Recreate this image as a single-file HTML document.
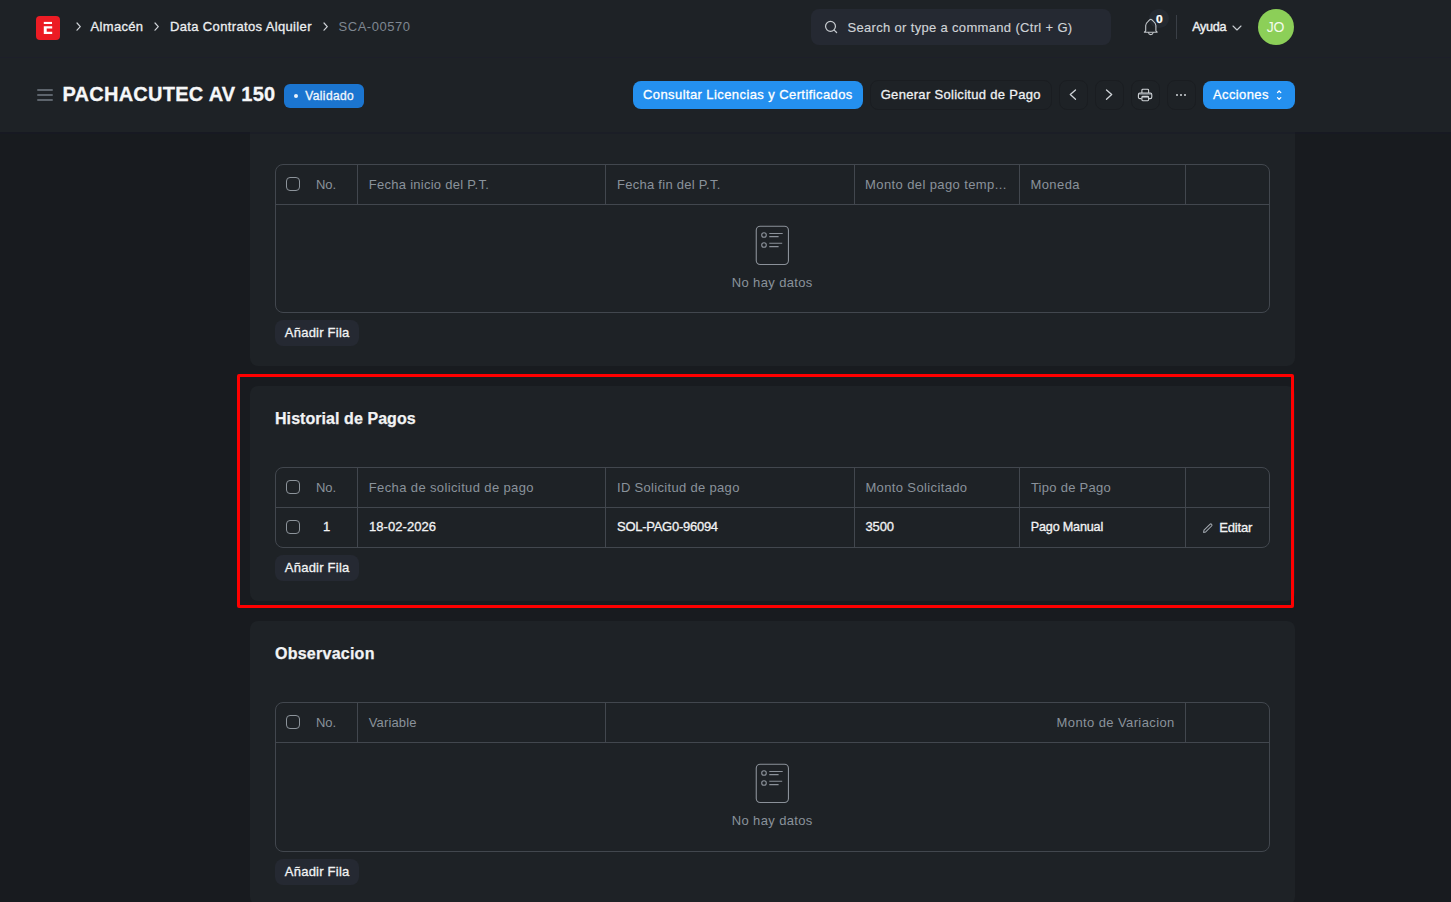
<!DOCTYPE html>
<html><head><meta charset="utf-8"><title>PACHACUTEC AV 150</title>
<style>
html,body{margin:0;padding:0;width:1451px;height:902px;overflow:hidden;background:#181b1f;}
body{position:relative;font-family:"Liberation Sans",sans-serif;}
.a{position:absolute;}
.t{white-space:nowrap;line-height:1;}
svg{display:block;overflow:visible;}
</style></head><body>
<div class="a" style="left:0px;top:0px;width:1451px;height:902px;background:#181b1f;"></div>
<div class="a" style="left:250px;top:60px;width:1045px;height:306px;background:#1e2226;border-radius:8px;"></div>
<div class="a" style="left:250px;top:386px;width:1045px;height:215px;background:#1e2226;border-radius:8px;"></div>
<div class="a" style="left:250px;top:621px;width:1045px;height:284px;background:#1e2226;border-radius:8px;"></div>
<div class="a" style="left:0px;top:0px;width:1451px;height:132px;background:#1e2226;"></div>
<div class="a" style="left:0px;top:57px;width:1451px;height:1px;background:#1d1f29;"></div>
<div class="a" style="left:0px;top:132px;width:1451px;height:2px;background:rgba(22,22,40,0.35);"></div>
<svg class="a" style="left:36px;top:16px" width="24" height="24" viewBox="0 0 24 24">
<rect width="24" height="24" rx="4" fill="#ec1c24"/>
<rect x="7.8" y="5.9" width="8.2" height="2.1" fill="#fff"/>
<path d="M7.8 10.3H16.2V12.5H10.7V15.8H16.2V18H7.8Z" fill="#fff"/>
</svg>
<svg class="a" style="left:74.5px;top:21.4px" width="7.3" height="11.2" viewBox="0 0 7.3 11.2"><path d="M2 2L5.3 5.6L2 9.2" fill="none" stroke="#cfd3d7" stroke-width="1.2" stroke-linecap="round" stroke-linejoin="round"/></svg>
<div class="a t" style="top:20.00px;font-size:13px;color:#eceef0;left:90.60px;letter-spacing:0.301px;-webkit-text-stroke:0.3px #eceef0;">Almacén</div>
<svg class="a" style="left:153px;top:21.4px" width="7.3" height="11.2" viewBox="0 0 7.3 11.2"><path d="M2 2L5.3 5.6L2 9.2" fill="none" stroke="#cfd3d7" stroke-width="1.2" stroke-linecap="round" stroke-linejoin="round"/></svg>
<div class="a t" style="top:20.00px;font-size:13px;color:#eceef0;left:170.00px;letter-spacing:0.354px;-webkit-text-stroke:0.3px #eceef0;">Data Contratos Alquiler</div>
<svg class="a" style="left:321.6px;top:21.4px" width="7.3" height="11.2" viewBox="0 0 7.3 11.2"><path d="M2 2L5.3 5.6L2 9.2" fill="none" stroke="#cfd3d7" stroke-width="1.2" stroke-linecap="round" stroke-linejoin="round"/></svg>
<div class="a t" style="top:20.00px;font-size:13px;color:#7e8791;left:338.60px;letter-spacing:0.508px;">SCA-00570</div>
<div class="a" style="left:811px;top:9px;width:300px;height:36px;background:#252932;border-radius:8px;"></div>
<svg class="a" style="left:818px;top:15px" width="28" height="25" viewBox="0 0 28 25">
<circle cx="12.5" cy="11.35" r="4.95" fill="none" stroke="#c5c9cd" stroke-width="1.25"/>
<path d="M16.2 15.1L18.6 17.5" stroke="#c5c9cd" stroke-width="1.25" stroke-linecap="round"/></svg>
<div class="a t" style="top:21.00px;font-size:13px;color:#cfd3d7;left:847.40px;letter-spacing:0.332px;-webkit-text-stroke:0.15px #cfd3d7;">Search or type a command (Ctrl + G)</div>
<div class="a" style="left:1149.3px;top:8.8px;width:19.4px;height:19.4px;border-radius:50%;background:#252a31"></div>
<svg class="a" style="left:1140px;top:10px" width="30" height="30" viewBox="0 0 30 30">
<path d="M4.4 22.2L5.7 20.8V15.6C5.7 13.8 6.6 12.6 7.9 11.6L9.6 9.9C10.3 9.2 11.3 9.2 12 9.9L13.7 11.6C15 12.6 15.9 13.8 15.9 15.6V20.8L17.2 22.2Z" fill="none" stroke="#c2c6ca" stroke-width="1.1" stroke-linejoin="round"/>
<path d="M8.4 22.5C8.7 23.9 9.6 24.6 10.8 24.6C12 24.6 12.9 23.9 13.2 22.5" fill="none" stroke="#c2c6ca" stroke-width="1.1" stroke-linecap="round"/>
</svg>
<div class="a t" style="top:14.73px;font-size:10px;color:#ffffff;left:1155.80px;font-weight:bold;-webkit-text-stroke:0.25px #ffffff;transform:scaleX(1.2);transform-origin:0 0;">0</div>
<div class="a" style="left:1176px;top:15px;width:1px;height:24px;background:#3a3f46;"></div>
<div class="a t" style="top:20.83px;font-size:12.6px;color:#eef0f2;left:1192.20px;letter-spacing:-0.292px;-webkit-text-stroke:0.4px #eef0f2;">Ayuda</div>
<svg class="a" style="left:1232px;top:25px" width="10" height="6" viewBox="0 0 10 6"><path d="M1 1L5 5L9 1" fill="none" stroke="#c9cdd1" stroke-width="1.1" stroke-linecap="round" stroke-linejoin="round"/></svg>
<div class="a" style="left:1258px;top:9px;width:36px;height:36px;border-radius:50%;background:#8ccf58"></div>
<div class="a t" style="top:20.15px;font-size:14px;color:#f3fbec;left:1266.70px;letter-spacing:-0.191px;">JO</div>
<svg class="a" style="left:35px;top:85px" width="20" height="20" viewBox="0 0 20 20"><path d="M2.8 5H17.2M2.8 10H17.2M2.8 15H17.2" stroke="#737b84" stroke-width="1.5" stroke-linecap="round"/></svg>
<div class="a t" style="top:84.07px;font-size:20px;color:#f6f7f8;left:62.40px;font-weight:bold;letter-spacing:0.266px;-webkit-text-stroke:0.3px #f6f7f8;">PACHACUTEC AV 150</div>
<div class="a" style="left:284px;top:84px;width:80px;height:24px;background:#1b75d0;border-radius:6px;"></div>
<div class="a" style="left:293.8px;top:93.8px;width:4.4px;height:4.4px;border-radius:50%;background:#eaf3fc"></div>
<div class="a t" style="top:89.64px;font-size:12px;color:#f2f7fd;left:305.20px;letter-spacing:0.398px;-webkit-text-stroke:0.3px #f2f7fd;">Validado</div>
<div class="a" style="left:633px;top:81px;width:230px;height:28px;background:#2490ef;border-radius:8px;"></div>
<div class="a t" style="top:88.00px;font-size:13px;color:#ffffff;left:643.00px;letter-spacing:0.410px;-webkit-text-stroke:0.3px #ffffff;">Consultar Licencias y Certificados</div>
<div class="a" style="left:870px;top:80px;width:182px;height:30px;border-radius:8px;box-sizing:border-box;border:1px solid #1a1d21;"></div>
<div class="a t" style="top:88.00px;font-size:13px;color:#eef0f2;left:880.70px;letter-spacing:0.307px;-webkit-text-stroke:0.3px #eef0f2;">Generar Solicitud de Pago</div>
<div class="a" style="left:1059px;top:80px;width:29px;height:30px;border-radius:8px;box-sizing:border-box;border:1px solid #1a1d21;"></div>
<div class="a" style="left:1095px;top:80px;width:29px;height:30px;border-radius:8px;box-sizing:border-box;border:1px solid #1a1d21;"></div>
<div class="a" style="left:1131px;top:80px;width:29px;height:30px;border-radius:8px;box-sizing:border-box;border:1px solid #1a1d21;"></div>
<div class="a" style="left:1167px;top:80px;width:29px;height:30px;border-radius:8px;box-sizing:border-box;border:1px solid #1a1d21;"></div>
<svg class="a" style="left:1069px;top:89.2px" width="8" height="11.5" viewBox="0 0 8 11.5"><path d="M6.5 0.9L1.3 5.55L6.5 10.2" fill="none" stroke="#d0d4d8" stroke-width="1.3" stroke-linecap="round" stroke-linejoin="round"/></svg>
<svg class="a" style="left:1105px;top:89.2px" width="8" height="11.5" viewBox="0 0 8 11.5"><path d="M1.5 0.9L6.7 5.55L1.5 10.2" fill="none" stroke="#d0d4d8" stroke-width="1.3" stroke-linecap="round" stroke-linejoin="round"/></svg>
<svg class="a" style="left:1131px;top:81px" width="28" height="28" viewBox="0 0 28 28">
<rect x="7.8" y="12.2" width="12.6" height="1.5" fill="#7d838a"/>
<rect x="10.9" y="15.6" width="6.8" height="1.5" fill="#7d838a"/>
<path d="M10.9 11.9V9.2C10.9 8.6 11.3 8.3 11.9 8.3H16.6C17.2 8.3 17.6 8.6 17.6 9.2V11.9" fill="none" stroke="#d0d4d8" stroke-width="1.1"/>
<path d="M10.5 17.6H8.9C7.9 17.6 7.4 17 7.4 15.9V13.7C7.4 12.6 7.9 12 8.9 12H19.3C20.3 12 20.8 12.6 20.8 13.7V15.9C20.8 17 20.3 17.6 19.3 17.6H17.8" fill="none" stroke="#d0d4d8" stroke-width="1.1"/>
<rect x="10.9" y="15.4" width="6.7" height="4.3" rx="0.9" fill="none" stroke="#d0d4d8" stroke-width="1.1"/>
</svg>
<div class="a" style="left:1175.7px;top:93.7px;width:2.2px;height:2.2px;border-radius:50%;background:#d0d4d8"></div>
<div class="a" style="left:1180.0px;top:93.7px;width:2.2px;height:2.2px;border-radius:50%;background:#d0d4d8"></div>
<div class="a" style="left:1184.3000000000002px;top:93.7px;width:2.2px;height:2.2px;border-radius:50%;background:#d0d4d8"></div>
<div class="a" style="left:1203px;top:81px;width:92px;height:28px;background:#2490ef;border-radius:8px;"></div>
<div class="a t" style="top:88.00px;font-size:13px;color:#ffffff;left:1213.00px;letter-spacing:0.391px;-webkit-text-stroke:0.3px #ffffff;">Acciones</div>
<svg class="a" style="left:1276px;top:89px" width="6.5" height="11.5" viewBox="0 0 6.5 11.5"><path d="M1.5 3.6L3.15 1.95L4.8 3.6M1.5 8.6L3.15 10.2L4.8 8.6" fill="none" stroke="#ffffff" stroke-width="1.3" stroke-linecap="round" stroke-linejoin="round"/></svg>
<div class="a" style="left:275px;top:164px;width:995px;height:149px;border-radius:8px;box-sizing:border-box;border:1px solid #42474e;"></div>
<div class="a" style="left:276px;top:204px;width:993px;height:1px;background:#42474e;"></div>
<div class="a" style="left:357px;top:165px;width:1px;height:39px;background:#42474e;"></div>
<div class="a" style="left:605px;top:165px;width:1px;height:39px;background:#42474e;"></div>
<div class="a" style="left:854px;top:165px;width:1px;height:39px;background:#42474e;"></div>
<div class="a" style="left:1019px;top:165px;width:1px;height:39px;background:#42474e;"></div>
<div class="a" style="left:1185px;top:165px;width:1px;height:39px;background:#42474e;"></div>
<div class="a" style="left:286px;top:177px;width:14px;height:14px;border-radius:4px;box-sizing:border-box;border:1px solid #8d949b;"></div>
<div class="a t" style="top:178.00px;font-size:13px;color:#8a929b;left:316.00px;letter-spacing:-0.017px;">No.</div>
<div class="a t" style="top:178.00px;font-size:13px;color:#8a929b;left:368.80px;letter-spacing:0.266px;">Fecha inicio del P.T.</div>
<div class="a t" style="top:178.00px;font-size:13px;color:#8a929b;left:617.00px;letter-spacing:0.272px;">Fecha fin del P.T.</div>
<div class="a t" style="top:178.00px;font-size:13px;color:#8a929b;left:865.10px;letter-spacing:0.390px;">Monto del pago temp...</div>
<div class="a t" style="top:178.00px;font-size:13px;color:#8a929b;left:1030.40px;letter-spacing:0.440px;">Moneda</div>
<svg class="a" style="left:754.5px;top:224.5px" width="35" height="41" viewBox="0 0 35 41">
<rect x="1.25" y="1.25" width="32.2" height="38.3" rx="4" fill="none" stroke="#8b9199" stroke-width="1.1"/>
<circle cx="9" cy="10" r="2.3" fill="none" stroke="#8b9199" stroke-width="1.1"/>
<circle cx="9" cy="20" r="2.3" fill="none" stroke="#8b9199" stroke-width="1.1"/>
<path d="M14.3 8.5H27.7M14.3 11.6H23.6M14.3 18.3H27.2M14.3 21.6H23.6" stroke="#8b9199" stroke-width="1.1"/>
</svg>
<div class="a t" style="top:276.00px;font-size:13px;color:#8a929b;left:731.80px;letter-spacing:0.361px;">No hay datos</div>
<div class="a" style="left:275px;top:320px;width:84px;height:26px;background:#252932;border-radius:8px;"></div>
<div class="a t" style="top:326.00px;font-size:13px;color:#f2f3f4;left:284.80px;letter-spacing:0.234px;-webkit-text-stroke:0.3px #f2f3f4;">Añadir Fila</div>
<div class="a t" style="top:411.26px;font-size:16px;color:#f2f3f4;left:275.00px;font-weight:bold;letter-spacing:0.064px;-webkit-text-stroke:0.25px #f2f3f4;">Historial de Pagos</div>
<div class="a" style="left:275px;top:467px;width:995px;height:81px;border-radius:8px;box-sizing:border-box;border:1px solid #42474e;"></div>
<div class="a" style="left:276px;top:507px;width:993px;height:1px;background:#42474e;"></div>
<div class="a" style="left:357px;top:468px;width:1px;height:79px;background:#42474e;"></div>
<div class="a" style="left:605px;top:468px;width:1px;height:79px;background:#42474e;"></div>
<div class="a" style="left:854px;top:468px;width:1px;height:79px;background:#42474e;"></div>
<div class="a" style="left:1019px;top:468px;width:1px;height:79px;background:#42474e;"></div>
<div class="a" style="left:1185px;top:468px;width:1px;height:79px;background:#42474e;"></div>
<div class="a" style="left:286px;top:480px;width:14px;height:14px;border-radius:4px;box-sizing:border-box;border:1px solid #8d949b;"></div>
<div class="a t" style="top:481.00px;font-size:13px;color:#8a929b;left:316.00px;letter-spacing:-0.017px;">No.</div>
<div class="a t" style="top:481.00px;font-size:13px;color:#8a929b;left:368.80px;letter-spacing:0.375px;">Fecha de solicitud de pago</div>
<div class="a t" style="top:481.00px;font-size:13px;color:#8a929b;left:617.00px;letter-spacing:0.316px;">ID Solicitud de pago</div>
<div class="a t" style="top:481.00px;font-size:13px;color:#8a929b;left:865.40px;letter-spacing:0.371px;">Monto Solicitado</div>
<div class="a t" style="top:481.00px;font-size:13px;color:#8a929b;left:1030.90px;letter-spacing:0.266px;">Tipo de Pago</div>
<div class="a" style="left:286px;top:520px;width:14px;height:14px;border-radius:4px;box-sizing:border-box;border:1px solid #8d949b;"></div>
<div class="a t" style="top:520.30px;font-size:13px;color:#f2f3f4;left:323.00px;-webkit-text-stroke:0.3px #f2f3f4;">1</div>
<div class="a t" style="top:520.30px;font-size:13px;color:#f2f3f4;left:369.00px;letter-spacing:0.052px;-webkit-text-stroke:0.3px #f2f3f4;">18-02-2026</div>
<div class="a t" style="top:520.30px;font-size:13px;color:#f2f3f4;left:617.00px;letter-spacing:-0.266px;-webkit-text-stroke:0.3px #f2f3f4;">SOL-PAG0-96094</div>
<div class="a t" style="top:520.30px;font-size:13px;color:#f2f3f4;left:865.40px;letter-spacing:-0.112px;-webkit-text-stroke:0.3px #f2f3f4;">3500</div>
<div class="a t" style="top:520.63px;font-size:12.6px;color:#f2f3f4;left:1030.80px;letter-spacing:-0.179px;-webkit-text-stroke:0.3px #f2f3f4;">Pago Manual</div>
<svg class="a" style="left:1198px;top:518px" width="20" height="20" viewBox="0 0 20 20">
<path d="M6 12.2L11.9 6.3C12.4 5.8 13.1 5.8 13.6 6.3C14.1 6.8 14.1 7.5 13.6 8L7.7 13.9L5.6 14.4Z" fill="none" stroke="#a3a9b0" stroke-width="1.05" stroke-linejoin="round"/>
</svg>
<div class="a t" style="top:521.00px;font-size:13px;color:#f2f3f4;left:1219.30px;letter-spacing:-0.174px;-webkit-text-stroke:0.3px #f2f3f4;">Editar</div>
<div class="a" style="left:275px;top:555px;width:84px;height:26px;background:#252932;border-radius:8px;"></div>
<div class="a t" style="top:561.00px;font-size:13px;color:#f2f3f4;left:284.80px;letter-spacing:0.234px;-webkit-text-stroke:0.3px #f2f3f4;">Añadir Fila</div>
<div class="a t" style="top:646.06px;font-size:16px;color:#f2f3f4;left:275.00px;font-weight:bold;letter-spacing:0.248px;-webkit-text-stroke:0.25px #f2f3f4;">Observacion</div>
<div class="a" style="left:275px;top:702px;width:995px;height:150px;border-radius:8px;box-sizing:border-box;border:1px solid #42474e;"></div>
<div class="a" style="left:276px;top:742px;width:993px;height:1px;background:#42474e;"></div>
<div class="a" style="left:357px;top:703px;width:1px;height:39px;background:#42474e;"></div>
<div class="a" style="left:605px;top:703px;width:1px;height:39px;background:#42474e;"></div>
<div class="a" style="left:1185px;top:703px;width:1px;height:39px;background:#42474e;"></div>
<div class="a" style="left:286px;top:715px;width:14px;height:14px;border-radius:4px;box-sizing:border-box;border:1px solid #8d949b;"></div>
<div class="a t" style="top:716.00px;font-size:13px;color:#8a929b;left:316.00px;letter-spacing:-0.017px;">No.</div>
<div class="a t" style="top:716.00px;font-size:13px;color:#8a929b;left:368.80px;letter-spacing:0.121px;">Variable</div>
<div class="a t" style="top:716.00px;font-size:13px;color:#8a929b;right:276.70px;margin-right:-0.40px;letter-spacing:0.395px;">Monto de Variacion</div>
<svg class="a" style="left:754.5px;top:762.5px" width="35" height="41" viewBox="0 0 35 41">
<rect x="1.25" y="1.25" width="32.2" height="38.3" rx="4" fill="none" stroke="#8b9199" stroke-width="1.1"/>
<circle cx="9" cy="10" r="2.3" fill="none" stroke="#8b9199" stroke-width="1.1"/>
<circle cx="9" cy="20" r="2.3" fill="none" stroke="#8b9199" stroke-width="1.1"/>
<path d="M14.3 8.5H27.7M14.3 11.6H23.6M14.3 18.3H27.2M14.3 21.6H23.6" stroke="#8b9199" stroke-width="1.1"/>
</svg>
<div class="a t" style="top:814.00px;font-size:13px;color:#8a929b;left:731.80px;letter-spacing:0.361px;">No hay datos</div>
<div class="a" style="left:275px;top:859px;width:84px;height:26px;background:#252932;border-radius:8px;"></div>
<div class="a t" style="top:865.00px;font-size:13px;color:#f2f3f4;left:284.80px;letter-spacing:0.234px;-webkit-text-stroke:0.3px #f2f3f4;">Añadir Fila</div>
<div class="a" style="left:237px;top:374px;width:1057px;height:234px;border-radius:2px;box-sizing:border-box;border:3px solid #ff0000;"></div>
</body></html>
